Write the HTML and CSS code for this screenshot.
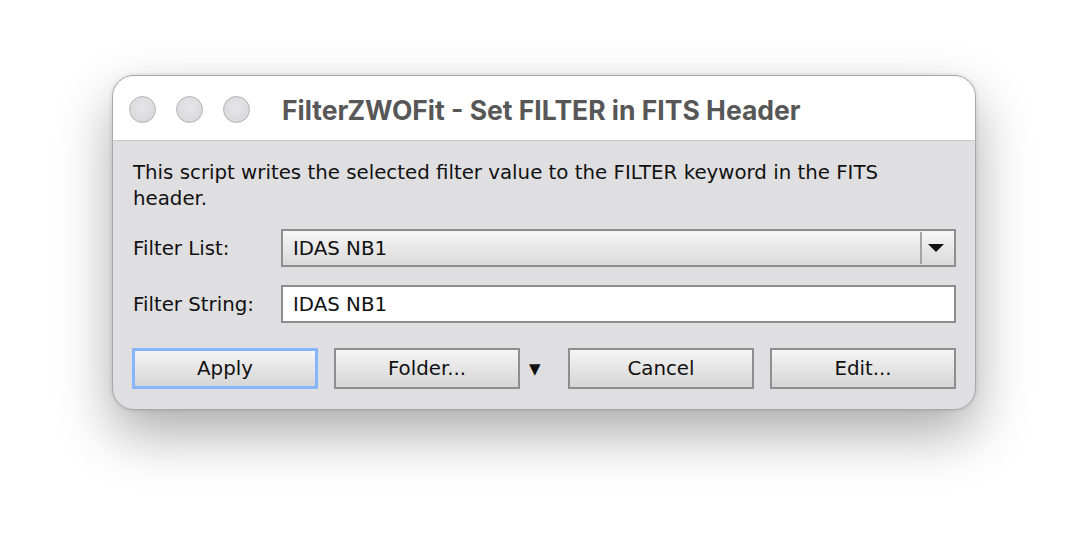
FILE: index.html
```html
<!DOCTYPE html>
<html>
<head>
<meta charset="utf-8">
<link rel="stylesheet" href="styles.css">
</head>
<body>
<div class="stage">
  <div class="window">
    <div class="titlebar">
      <div class="lights">
        <span class="light"></span>
        <span class="light"></span>
        <span class="light"></span>
      </div>
      <div class="title">FilterZWOFit - Set FILTER in FITS Header</div>
    </div>
    <div class="content">
      <p class="desc">This script writes the selected filter value to the FILTER keyword in the FITS header.</p>
      <div class="form">
        <label class="label">Filter List:</label>
        <div class="combo">
          <span class="combo-text">IDAS NB1</span>
          <span class="combo-sep"></span>
          <span class="combo-arrow"></span>
        </div>
        <label class="label">Filter String:</label>
        <div class="field">IDAS NB1</div>
      </div>
      <div class="buttons">
        <button class="btn btn-focus">Apply</button>
        <div class="menu-group">
          <button class="btn">Folder...</button>
          <span class="menu-arrow">▼</span>
        </div>
        <button class="btn">Cancel</button>
        <button class="btn">Edit...</button>
      </div>
    </div>
  </div>
</div>
</body>
</html>
```
FILE: styles.css
```css
html, body {
  margin: 0;
  padding: 0;
  background: #ffffff;
}
.stage {
  padding: 75px 0 0 112px;
  width: 1088px;
  height: 558px;
  box-sizing: border-box;
}
.window {
  width: 864px;
  height: 335px;
  box-sizing: border-box;
  border: 1px solid #a9a9a9;
  border-radius: 22px;
  background: #dfdfe1;
  overflow: hidden;
  box-shadow: 0 24px 55px rgba(0, 0, 0, 0.33), 0 0 4px rgba(0, 0, 0, 0.15);
  display: flex;
  flex-direction: column;
}
.titlebar {
  height: 64px;
  flex: none;
  background: #ffffff;
  border-bottom: 1px solid #c9c9cb;
  display: flex;
  align-items: center;
  padding-left: 16px;
  gap: 32px;
}
.lights {
  display: flex;
  gap: 20px;
  padding-top: 2px;
}
.light {
  width: 27px;
  height: 27px;
  box-sizing: border-box;
  border-radius: 50%;
  border: 1.5px solid #b0b0b2;
  background: radial-gradient(circle at 50% 40%, #e6e6e8 0%, #dadadc 70%, #d2d2d4 100%);
}
.title {
  font-family: Inter, "Liberation Sans", sans-serif;
  font-weight: 700;
  font-size: 26.5px;
  color: #575757;
  padding-top: 3px;
}
.content {
  padding: 19px 19px 0 19px;
  font-family: "DejaVu Sans", sans-serif;
  font-size: 19.8px;
  color: #111111;
}
.desc {
  margin: 0;
  line-height: 26px;
  max-width: 780px;
  padding-left: 1px;
}
.form {
  margin-top: 17px;
  display: grid;
  grid-template-columns: 149px 1fr;
  row-gap: 18px;
  align-items: center;
}
.label {
  padding-left: 1px;
}
.combo {
  height: 38px;
  box-sizing: border-box;
  border: 2px solid #8e8e8e;
  background: linear-gradient(#f7f7f7, #d9d9d9);
  display: flex;
  align-items: center;
  padding-left: 10px;
}
.combo-text {
  flex: 1;
}
.combo-sep {
  width: 2px;
  height: 32px;
  background: #a4a4a4;
}
.combo-arrow {
  width: 0;
  height: 0;
  margin: 0 10px 0 6px;
  border-left: 8px solid transparent;
  border-right: 8px solid transparent;
  border-top: 8px solid #111111;
}
.field {
  height: 38px;
  box-sizing: border-box;
  border: 2px solid #8e8e8e;
  background: #ffffff;
  display: flex;
  align-items: center;
  padding-left: 10px;
}
.buttons {
  margin-top: 25px;
  display: flex;
  gap: 16px;
}
.menu-group {
  display: flex;
  align-items: center;
}
.menu-arrow {
  width: 32px;
  box-sizing: border-box;
  padding-left: 9px;
  font-size: 15px;
  color: #111111;
}
.btn {
  width: 186px;
  height: 41px;
  box-sizing: border-box;
  border: 2px solid #8e8e8e;
  background: linear-gradient(#f5f5f5, #d5d5d5);
  font-family: "DejaVu Sans", sans-serif;
  font-size: 19.8px;
  color: #111111;
  padding: 0;
  margin: 0;
  border-radius: 0;
}
.btn-focus {
  border: 3px solid #89b3fb;
}
```
